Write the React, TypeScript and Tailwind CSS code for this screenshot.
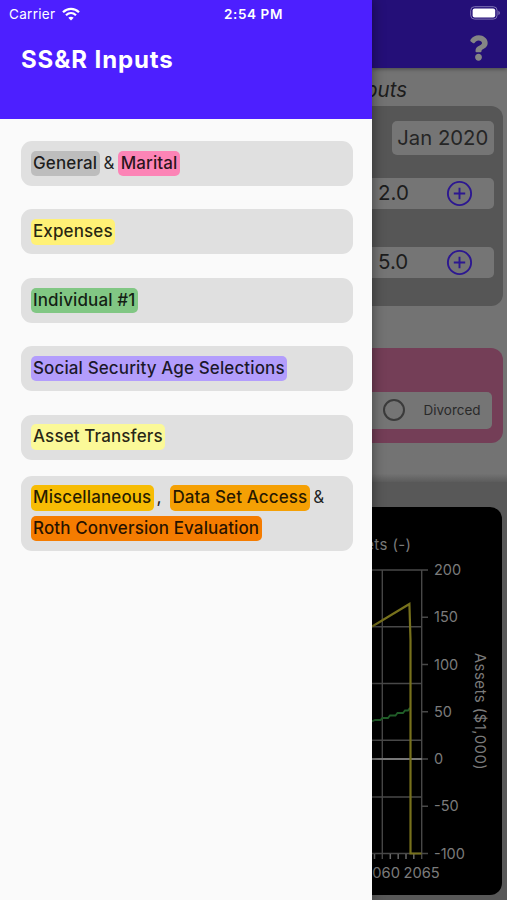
import clsx from "clsx";
import { FaQuestion } from "react-icons/fa";

interface Tag {
  label: string;
  color: string;
  after?: string;
}

const menu: Tag[][] = [
  [
    { label: "General", color: "bg-[#bdbdbd]", after: "&" },
    { label: "Marital", color: "bg-[#fc84b6]" },
  ],
  [{ label: "Expenses", color: "bg-[#fff176]" }],
  [{ label: "Individual #1", color: "bg-[#81c784]" }],
  [{ label: "Social Security Age Selections", color: "bg-[#b39dfc]" }],
  [{ label: "Asset Transfers", color: "bg-[#fbf998]" }],
];

const ticks = [200, 150, 100, 50, 0, -50, -100];

function TagLabel({ label, color }: Tag) {
  return (
    <span
      className={clsx(
        "h-[25.5px] rounded-[5px] px-[2.5px] leading-[25.5px] whitespace-nowrap",
        color
      )}
    >
      {label}
    </span>
  );
}

function Wifi() {
  return (
    <svg width="18" height="14" viewBox="0 0 18 14" fill="none" stroke="white">
      <path d="M1 5.2C5.6.7 12.4.7 17 5.2" strokeWidth="2.3" />
      <path d="M4 8.3c3-2.8 7-2.8 10 0" strokeWidth="2.2" />
      <path d="M9 13.6 6.3 10.8c1.6-1.5 3.8-1.5 5.4 0Z" fill="white" stroke="none" />
    </svg>
  );
}

function Battery() {
  return (
    <svg width="31" height="14" viewBox="0 0 31 14">
      <rect x=".7" y=".7" width="26.4" height="12.4" rx="3.8" fill="none" stroke="#8074b5" strokeWidth="1" />
      <rect x="2.6" y="2.4" width="22.6" height="9" rx="2" fill="white" />
      <path d="M28.4 4.7c2 .8 2 3.6 0 4.4Z" fill="#8074b5" />
    </svg>
  );
}

function Drawer() {
  return (
    <aside className="z-10 flex w-[372px] shrink-0 flex-col bg-[#fafafa] shadow-[0_0_12px_rgba(0,0,0,0.45)]">
      <header className="h-[119px] bg-[#4d1fff] text-white">
        <div className="flex h-7 items-center pl-[9px] text-[13.5px]">
          <span className="w-[53px] tracking-[0.3px]">Carrier</span>
          <Wifi />
          <span className="ml-[144px] text-[13.5px] font-semibold tracking-[0.6px] whitespace-nowrap">
            2:54 PM
          </span>
        </div>
        <h1 className="mt-[16px] pl-[21px] text-[24px] leading-8 font-bold tracking-[0.9px]">
          SS&amp;R Inputs
        </h1>
      </header>
      <nav className="flex flex-col pt-[22px] pr-[19.5px] pl-[20.5px] text-[17px] font-medium tracking-[0.12px] text-black/85">
        <div className="flex flex-col gap-[23.4px]">
          {menu.map((tags) => (
            <div
              key={tags[0].label}
              className="flex h-[45px] items-center rounded-[11px] bg-[#e0e0e0] pl-[10px]"
            >
              {tags.map((tag) => (
                <div key={tag.label} className="flex items-center">
                  <TagLabel {...tag} />
                  {tag.after && <span className="mx-[3.7px] font-normal">{tag.after}</span>}
                </div>
              ))}
            </div>
          ))}
        </div>
        <div className="mt-[16.4px] flex h-[75.5px] flex-col gap-[5px] rounded-[11px] bg-[#e0e0e0] pt-[9.5px] pl-[10px]">
          <div className="flex h-[25.5px] items-center">
            <TagLabel label="Miscellaneous" color="bg-[#f7bc04]" />
            <span className="w-[16px] pl-[2.5px]">,</span>
            <TagLabel label="Data Set Access" color="bg-[#f5a004]" />
            <span className="ml-[3.5px] font-normal">&amp;</span>
          </div>
          <div className="flex">
            <TagLabel label="Roth Conversion Evaluation" color="bg-[#f57c00]" />
          </div>
        </div>
      </nav>
    </aside>
  );
}

function Stepper({ value }: { value: string }) {
  return (
    <div className="flex h-[31px] w-[121.5px] items-center rounded-r-[5px] bg-[#757575] pl-[6px] text-[20.5px] text-[#1c1c1c]">
      <span className="w-[67.5px]">{value}</span>
      <svg width="27" height="27" viewBox="0 0 27 27" fill="none" stroke="#2c1791" strokeWidth="1.9">
        <circle cx="13.5" cy="13.5" r="11.6" />
        <path d="M13.5 7.8v11.4M7.8 13.5h11.4" />
      </svg>
    </div>
  );
}

function Chart() {
  return (
    <svg
      width="130"
      height="388"
      viewBox="372 507 130 388"
      className="mt-[25px] block rounded-r-[12px] bg-black"
      fill="#7b7b7b"
      fontSize="15"
    >
      <text x="411.5" y="550" textAnchor="end" letterSpacing=".4">
        Assets (-)
      </text>
      <g stroke="#484848" strokeWidth="1.4">
        <path d="M372 570H428M372 626.7H421.5M372 683.5H421.5M372 740.3H421.5M372 797H421.5M372 853.5H428M382.3 570V859M421.7 570V859" />
        <path d="M421.5 617.2h6.5M421.5 664.5h6.5M421.5 711.8h6.5M421.5 759h6.5M421.5 806.3h6.5" />
      </g>
      <path d="M374.5 854v5M390.3 854v5M398.2 854v5M406 854v5M413.8 854v5" stroke="#666" strokeWidth="1.5" />
      <path d="M372 759h50" stroke="#777" strokeWidth="2.2" />
      <path
        d="M372 721.3l3-1.3h5.5l2-2h5.5l2-2.5h5.5l2-2.5h5.5l2-2.5h3l1.5-2h1"
        fill="none"
        stroke="#205d28"
        strokeWidth="1.8"
      />
      <path d="M372 626.5L409.4 604L410.5 640V853.5H421.5" fill="none" stroke="#77711c" strokeWidth="2.2" />
      {ticks.map((tick, i) => (
        <text key={tick} x="434" y={575 + i * 47.25} fontSize="14.5">
          {tick}
        </text>
      ))}
      <text x="400" y="877.5" textAnchor="end" fontSize="14.7">2060</text>
      <text x="403.5" y="877.5" fontSize="14.7">2065</text>
      <text transform="translate(475 711.5) rotate(90)" textAnchor="middle" letterSpacing=".45">
        Assets ($1,000)
      </text>
    </svg>
  );
}

function Background() {
  return (
    <main className="flex w-[135px] flex-col bg-[#585858]">
      <header className="z-[1] flex h-[68px] shrink-0 flex-col items-end bg-[#240f78] pt-[6px] pr-[6px] shadow-[0_1px_4px_rgba(0,0,0,0.4)]">
        <Battery />
        <FaQuestion className="mt-[15px] mr-[13px] h-[26px] w-[19px] text-[#858585]" />
      </header>
      <div className="h-[414px] shrink-0 bg-linear-to-b from-[#737373] from-[98%] to-[#5c5c5c]">
        <div className="flex h-[38px] w-[35px] items-center justify-end overflow-hidden pt-[6px] text-[20.5px] text-[#1c1c1c] italic">
          Inputs
        </div>
        <section className="flex h-[200px] w-[131px] flex-col rounded-r-[12px] bg-[#565656] pt-[15px]">
          <div className="ml-[20px] flex h-[34px] w-[101.5px] items-center justify-center rounded-[5px] bg-[#757575] text-[20.3px] whitespace-nowrap text-[#252525]">
            Jan 2020
          </div>
          <div className="mt-[23px] flex flex-col gap-[37.5px]">
            <Stepper value="2.0" />
            <Stepper value="5.0" />
          </div>
        </section>
        <section className="mt-[42px] h-[95px] w-[131px] rounded-r-[12px] bg-[#743e57] pt-[44px]">
          <div className="flex h-[36.5px] w-[120px] items-center rounded-r-[5px] bg-[#757575] pl-[11px] text-[13.5px] text-[#2a2a2a]">
            <span className="h-[22px] w-[22px] rounded-full border-2 border-[#3b3b3b]" />
            <span className="ml-[18.5px]">Divorced</span>
          </div>
        </section>
      </div>
      <Chart />
    </main>
  );
}

export default function App() {
  return (
    <div className="flex h-[900px] w-[507px] overflow-hidden font-['Inter',sans-serif]">
      <Drawer />
      <Background />
    </div>
  );
}
